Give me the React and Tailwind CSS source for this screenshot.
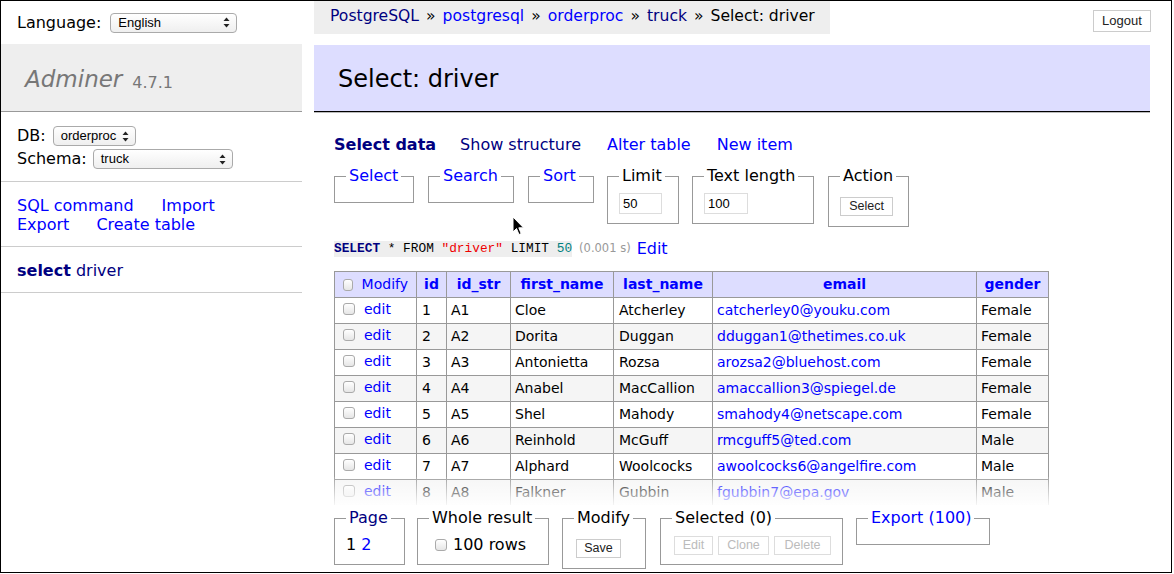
import React from "react";

const rows = [
  [1, "A1", "Cloe", "Atcherley", "catcherley0@youku.com", "Female"],
  [2, "A2", "Dorita", "Duggan", "dduggan1@thetimes.co.uk", "Female"],
  [3, "A3", "Antonietta", "Rozsa", "arozsa2@bluehost.com", "Female"],
  [4, "A4", "Anabel", "MacCallion", "amaccallion3@spiegel.de", "Female"],
  [5, "A5", "Shel", "Mahody", "smahody4@netscape.com", "Female"],
  [6, "A6", "Reinhold", "McGuff", "rmcguff5@ted.com", "Male"],
  [7, "A7", "Alphard", "Woolcocks", "awoolcocks6@angelfire.com", "Male"],
  [8, "A8", "Falkner", "Gubbin", "fgubbin7@epa.gov", "Male"],
];

const UpDown = () => (
  <svg width="7" height="11" viewBox="0 0 7 11">
    <path d="M3.5 0.5 L6.5 4 L0.5 4 Z" fill="#222" />
    <path d="M3.5 10.5 L6.5 7 L0.5 7 Z" fill="#222" />
  </svg>
);

// fake native select (mac style)
const Sel = ({ className, children }) => (
  <div
    className={
      "flex items-center justify-between h-[20px] rounded-[4px] border border-[#aaa] bg-linear-to-b from-white to-[#efefef] pl-[7px] pr-[6px] font-['Liberation_Sans',sans-serif] text-[13px] text-black " +
      className
    }
  >
    <span>{children}</span>
    <UpDown />
  </div>
);

const Check = () => (
  <span className="inline-block w-[12px] h-[12px] rounded-[3px] border border-[#aaa] bg-linear-to-b from-white to-[#e6e6e6] align-middle" />
);

const Btn = ({ children, disabled, className = "" }) => (
  <span
    className={
      "inline-flex items-center justify-center h-[19px] border bg-white font-['Liberation_Sans',sans-serif] text-[12.5px] " +
      (disabled ? "border-[#ddd] text-[#bbb] " : "border-[#ccc] text-[#222] ") +
      className
    }
  >
    {children}
  </span>
);

const Fs = ({ legend, className = "", children }) => (
  <fieldset className={"border border-[#999] px-[11px] pt-[8px] pb-[9px] shrink-0 " + className}>
    <legend className="px-[3px] text-[16px] leading-[18px] whitespace-nowrap">{legend}</legend>
    {children}
  </fieldset>
);

const Cursor = () => (
  <svg className="absolute left-[512px] top-[216px]" width="13" height="20" viewBox="0 0 13 20">
    <path d="M1 1 L1 16 L4.5 12.5 L7 18.5 L9.2 17.6 L6.8 11.8 L11.5 11.8 Z" fill="#000" stroke="#fff" strokeWidth="1" />
  </svg>
);

export default function App() {
  return (
    <div className="w-[1174px] h-[574px] bg-white relative overflow-hidden font-['DejaVu_Sans',sans-serif] text-black">
      <div className="w-[1172px] h-[573px] border border-black flex">
        {/* menu */}
        <div className="w-[301px] shrink-0">
          <div className="h-[43px] flex items-center pl-[16px] gap-[9px] text-[16px]">
            <span>Language:</span>
            <Sel className="w-[127px]">English</Sel>
          </div>
          <div className="h-[68px] bg-[#eee] border-b border-[#999] flex items-end pb-[18px] pl-[24px] text-[#777]">
            <span className="italic text-[23px] leading-[28px]">Adminer</span>
            <span className="text-[16px] leading-[20px] ml-[10px]">4.7.1</span>
          </div>
          <div className="pt-[14px] pb-[12px] pl-[16px] border-b border-[#ccc] text-[16px] flex flex-col gap-[3px]">
            <div className="flex items-center gap-[7px] h-[20px]">
              <span>DB:</span>
              <Sel className="w-[83px]">orderproc</Sel>
            </div>
            <div className="flex items-center gap-[6px] h-[20px]">
              <span>Schema:</span>
              <Sel className="w-[140px]">truck</Sel>
            </div>
          </div>
          <div className="pt-[14px] pb-[12px] pl-[16px] border-b border-[#ccc] text-[16px] leading-[19px] text-[#00f]">
            <div className="flex gap-[28px]">
              <span>SQL command</span>
              <span>Import</span>
            </div>
            <div className="flex gap-[27px]">
              <span>Export</span>
              <span>Create table</span>
            </div>
          </div>
          <div className="pt-[14px] pb-[12px] pl-[16px] border-b border-[#ccc] text-[16px] leading-[19px] text-[#000080]">
            <span className="font-bold">select</span> driver
          </div>
        </div>

        {/* content */}
        <div className="w-[836px] ml-[12px] shrink-0">
          <div className="flex items-start h-[33px]">
            <div className="h-[33px] w-[516px] bg-[#eee] pl-[16px] flex items-center text-[15.6px] pb-[2px]">
              <span className="text-[#000080]">PostgreSQL</span>
              <span className="mx-[7px]">»</span>
              <span className="text-[#00f]">postgresql</span>
              <span className="mx-[7px]">»</span>
              <span className="text-[#00f]">orderproc</span>
              <span className="mx-[7px]">»</span>
              <span className="text-[#000080]">truck</span>
              <span className="mx-[7px]">»</span>
              <span>Select: driver</span>
            </div>
            <Btn className="ml-auto mt-[9px] w-[58px] h-[22px] text-[13px] translate-x-[1px]">Logout</Btn>
          </div>

          <div className="mt-[11px] h-[67px] bg-[#ddf] border-b border-black shadow-[0_1px_0_#bbb] flex items-center pl-[24px] text-[24px] pt-[2px]">
            Select: driver
          </div>

          <div className="pl-[20px]">
            <div className="mt-[23px] flex gap-[26px] text-[16px] leading-[20px]">
              <span className="font-bold text-[#000080]">Select data</span>
              <span className="text-[#000080] -ml-[2px]">Show structure</span>
              <span className="text-[#00f]">Alter table</span>
              <span className="text-[#00f]">New item</span>
            </div>

            <div className="mt-[12px] flex items-start">
              <Fs legend={<span className="text-[#00f]">Select</span>} className="w-[80px] pb-[8px]" />
              <Fs legend={<span className="text-[#00f]">Search</span>} className="w-[86px] ml-[14px] pb-[8px]" />
              <Fs legend={<span className="text-[#00f]">Sort</span>} className="w-[66px] ml-[14px] pb-[8px]" />
              <Fs legend="Limit" className="w-[72px] ml-[13px]">
                <div className="w-[43px] h-[21px] border border-[#ddd] bg-white pl-[3px] flex items-center font-['Liberation_Sans',sans-serif] text-[13px]">50</div>
              </Fs>
              <Fs legend="Text length" className="w-[122px] ml-[13px]">
                <div className="w-[44px] h-[21px] border border-[#ddd] bg-white pl-[3px] flex items-center font-['Liberation_Sans',sans-serif] text-[13px]">100</div>
              </Fs>
              <Fs legend="Action" className="w-[81px] ml-[14px]">
                <Btn className="w-[53px]">Select</Btn>
              </Fs>
            </div>

            <div className="mt-[14px] flex items-center h-[16px]">
              <code className="bg-[#eee] font-['Liberation_Mono',monospace] text-[12.8px] leading-[16px] whitespace-pre">
                <span className="font-bold text-[#000080]">SELECT</span> * FROM <span className="text-[#e00]">"driver"</span> LIMIT <span className="text-[#008080]">50</span>
              </code>
              <span className="ml-[7px] text-[11.5px] text-[#999]">(0.001 s)</span>
              <span className="ml-[6px] text-[16px] text-[#00f]">Edit</span>
            </div>

            <div className="relative mt-[14px] h-[234px] overflow-hidden w-[716px]">
              <table className="border-collapse table-fixed w-[715px] text-[14px]">
                <colgroup>
                  <col className="w-[82px]" />
                  <col className="w-[30px]" />
                  <col className="w-[64px]" />
                  <col className="w-[103px]" />
                  <col className="w-[99px]" />
                  <col className="w-[264px]" />
                  <col className="w-[72px]" />
                </colgroup>
                <thead>
                  <tr className="bg-[#ddf] h-[26px]">
                    <th className="border border-[#999] px-[8px] text-left font-normal text-[#00f]">
                      <span className="flex items-center gap-[9px]">
                        <Check />
                        Modify
                      </span>
                    </th>
                    {["id", "id_str", "first_name", "last_name", "email", "gender"].map((h) => (
                      <th key={h} className="border border-[#999] px-[4px] text-center font-bold text-[#00f]">
                        {h}
                      </th>
                    ))}
                  </tr>
                </thead>
                <tbody>
                  {rows.map((r, i) => (
                    <tr key={r[0]} className={"h-[26px] " + (i % 2 ? "bg-[#f5f5f5]" : "bg-white")}>
                      <td className="border border-[#999] px-[8px]">
                        <span className="flex items-center gap-[9px] -mt-[3px]">
                          <Check />
                          <span className="text-[#00f]">edit</span>
                        </span>
                      </td>
                      <td className="border border-[#999] px-[5px]">{r[0]}</td>
                      <td className="border border-[#999] px-[4px]">{r[1]}</td>
                      <td className="border border-[#999] px-[4px]">{r[2]}</td>
                      <td className="border border-[#999] px-[5px]">{r[3]}</td>
                      <td className="border border-[#999] px-[4px] text-[#00f]">{r[4]}</td>
                      <td className="border border-[#999] px-[4px]">{r[5]}</td>
                    </tr>
                  ))}
                </tbody>
              </table>
              <div className="absolute left-0 right-0 bottom-0 h-[28px] bg-linear-to-b from-white/10 to-white/90" />
            </div>

            <div className="mt-[4px] flex items-start">
              <Fs legend={<span className="text-[#000080]">Page</span>} className="w-[71px]">
                <div className="text-[16px] leading-[20px]">
                  1 <span className="text-[#00f]">2</span>
                </div>
              </Fs>
              <Fs legend="Whole result" className="w-[132px] ml-[12px] px-[9px]">
                <div className="flex items-center gap-[6px] text-[16px] leading-[20px] pl-[6px]">
                  <Check />
                  100 rows
                </div>
              </Fs>
              <Fs legend="Modify" className="w-[84px] ml-[13px]">
                <Btn className="w-[45px] mt-[1px] ml-[2px]">Save</Btn>
              </Fs>
              <Fs legend="Selected (0)" className="w-[183px] ml-[14px]">
                <div className="flex gap-[5px] mt-[1px] ml-[2px]">
                  <Btn disabled className="w-[39px]">Edit</Btn>
                  <Btn disabled className="w-[51px]">Clone</Btn>
                  <Btn disabled className="w-[57px]">Delete</Btn>
                </div>
              </Fs>
              <Fs legend={<span className="text-[#00f]">Export (100)</span>} className="w-[134px] ml-[13px] pb-[8px]" />
            </div>
          </div>
        </div>
      </div>
      <Cursor />
    </div>
  );
}
